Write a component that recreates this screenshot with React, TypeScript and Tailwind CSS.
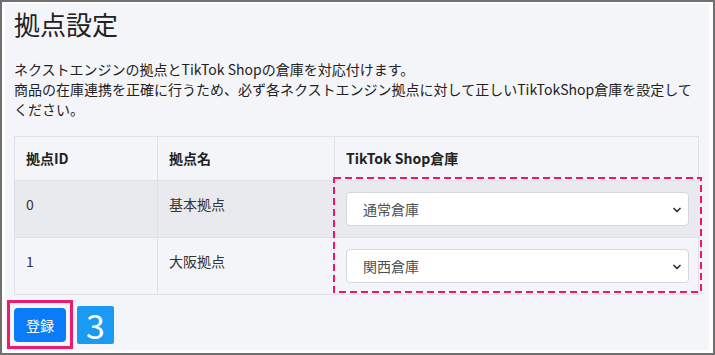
import { ChevronDown } from "lucide-react";

const rows = [
  { id: "0", name: "基本拠点", wh: "通常倉庫", striped: true },
  { id: "1", name: "大阪拠点", wh: "関西倉庫", striped: false },
];

function WarehouseSelect({ value }: { value: string }) {
  return (
    <div className="relative flex h-[34px] items-center rounded-[4px] border border-[#d4d7dc] bg-white pl-[16px] text-[14px] text-[#4a4f55]">
      <span>{value}</span>
      <ChevronDown className="absolute right-[5px] top-[11px] h-[12px] w-[12px] text-[#333]" strokeWidth={3.5} />
    </div>
  );
}

export default function App() {
  return (
    <div
      className="h-[355px] w-[715px] border-2 border-[#707070] bg-white pb-[3px] pl-[3px] pr-[4px] pt-[2px]"
      style={{ fontFamily: '"Noto Sans CJK JP", "Noto Sans", sans-serif' }}
    >
      <div className="flex h-full flex-col bg-[#f4f5f9] px-[9px] text-[#222]">
        <h2 className="mt-[5px] text-[26px] leading-[30px] text-[#222]">拠点設定</h2>
        <p className="mt-[20px] text-[14px] leading-[20px] text-[#222]">
          ネクストエンジンの拠点とTikTok Shopの倉庫を対応付けます。
          <br />
          商品の在庫連携を正確に行うため、必ず各ネクストエンジン拠点に対して正しいTikTokShop倉庫を設定して
          <br />
          ください。
        </p>

        <div className="relative mt-[17px] w-[685px]">
          <div className="grid grid-cols-[143px_177px_365px] border border-[#dee2e6] text-[14px]">
            <div className="border-r border-[#dee2e6] px-[11px] py-[11px] font-bold leading-[21px]">拠点ID</div>
            <div className="border-r border-[#dee2e6] px-[11px] py-[11px] font-bold leading-[21px]">拠点名</div>
            <div className="px-[11px] py-[11px] font-bold leading-[21px]">TikTok Shop倉庫</div>
            {rows.map((r) => (
              <div key={r.id} className={`col-span-3 grid grid-cols-[143px_177px_365px] border-t border-[#dee2e6] ${r.striped ? "bg-[#e9eaee]" : ""}`}>
                <div className="border-r border-[#dee2e6] px-[11px] pt-[13px] leading-[20px] text-[#333]">{r.id}</div>
                <div className="border-r border-[#dee2e6] px-[11px] pt-[13px] leading-[20px] text-[#333]">{r.name}</div>
                <div className="px-[11px] py-[11px]">
                  <WarehouseSelect value={r.wh} />
                </div>
              </div>
            ))}
          </div>
          <svg className="pointer-events-none absolute left-[319px] top-[41px]" width="370" height="117">
            <rect x="1" y="1" width="367" height="114" fill="none" stroke="#f0156b" strokeWidth="2" strokeDasharray="7 4" />
          </svg>
        </div>

        <div className="-ml-[7px] mt-[5px] flex items-center gap-[4px]">
          <div className="border-[3px] border-[#ee1a6e] px-[4px] pb-[4px] pt-[5px]">
            <button className="flex h-[34px] w-[52px] items-center justify-center rounded-[4px] bg-[#0a7cf8] text-[14px] text-white">
              登録
            </button>
          </div>
          <div className="flex h-[38px] w-[37px] items-center justify-center rounded-[2px] bg-[#1a9af3] text-[34px] leading-none text-white">
            3
          </div>
        </div>
      </div>
    </div>
  );
}
